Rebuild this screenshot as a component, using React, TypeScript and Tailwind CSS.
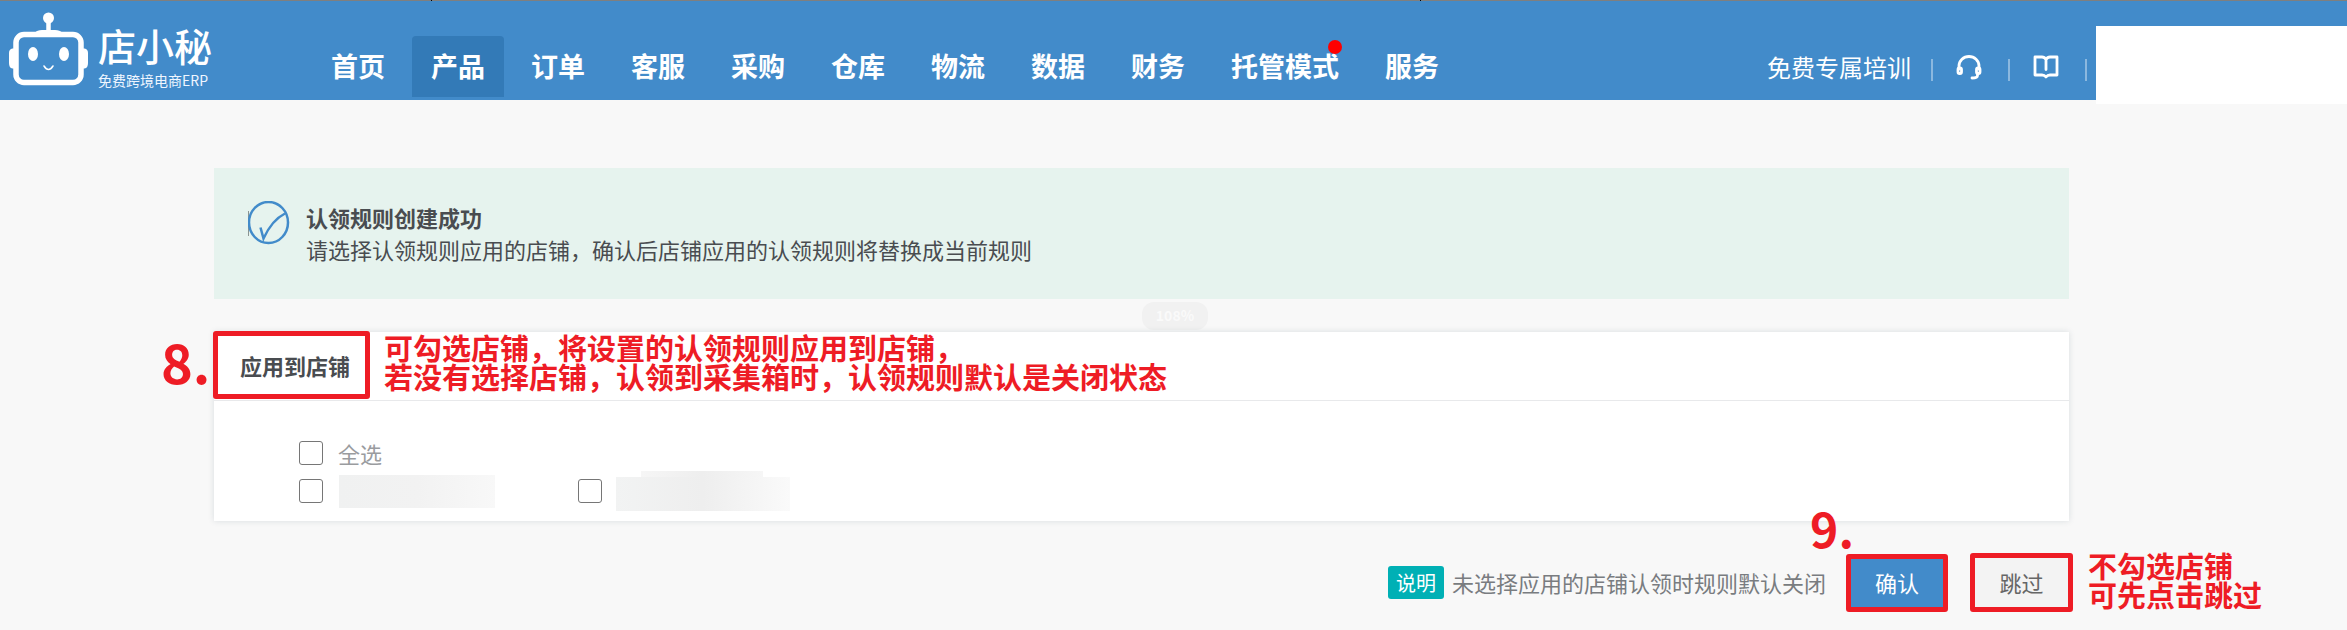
import React, { useState } from 'react';

const navItems = [
  { label: '首页' },
  { label: '产品', active: true },
  { label: '订单' },
  { label: '客服' },
  { label: '采购' },
  { label: '仓库' },
  { label: '物流' },
  { label: '数据' },
  { label: '财务' },
  { label: '托管模式', dot: true },
  { label: '服务' },
];

const Logo: React.FC = () => (
  <a href="#" className="flex items-start pl-2 pt-[11px] text-white">
    <svg width="82" height="75" viewBox="0 0 82 75" fill="none" aria-hidden="true">
      <circle cx="40.500" cy="6" r="5.500" fill="#fff" />
      <path d="M40.500 10v11" stroke="#fff" strokeWidth="4.500" />
      <path d="M27 20.500q2-2.500 7-2.500h13q5 0 7 2.500z" fill="#fff" />
      <rect x="8" y="22.500" width="65" height="48" rx="8" stroke="#fff" strokeWidth="5.500" />
      <path d="M6 36.500H4.500Q1 37 1 41v10q0 5 3.500 5.500H6zM75 36.500h1.500Q80 37 80 41v10q0 5-3.500 5.500H75z" fill="#fff" />
      <ellipse cx="25" cy="42" rx="5" ry="7" fill="#fff" />
      <ellipse cx="56" cy="42" rx="5" ry="7" fill="#fff" />
      <path d="M36 54q4.500 7 9 0" stroke="#fff" strokeWidth="1.500" strokeLinecap="round" />
    </svg>
    <span className="ml-2 mt-2 flex w-[113px] flex-col whitespace-nowrap">
      <span className="text-[38px] font-medium leading-[50px]">店小秘</span>
      <span className="text-[14px] leading-5 text-blue-50">免费跨境电商ERP</span>
    </span>
  </a>
);

const HeadsetIcon: React.FC = () => (
  <svg width="26" height="26" viewBox="0 0 26 26" fill="none" stroke="#fff" strokeWidth="2.800" strokeLinecap="round" strokeLinejoin="round" aria-hidden="true">
    <path d="M3 15v-3a10 9.500 0 0 1 20 0v3" />
    <rect x="2" y="14" width="3.500" height="5.500" rx="1.500" />
    <rect x="20.500" y="14" width="3.500" height="5.500" rx="1.500" />
    <path d="M21.500 19.500v2q0 2.500-5.500 2.500" />
  </svg>
);

const BookIcon: React.FC = () => (
  <svg width="26" height="24" viewBox="0 0 26 24" fill="none" stroke="#fff" strokeWidth="2.800" strokeLinecap="round" strokeLinejoin="round" aria-hidden="true">
    <path d="M13 4.500Q11.500 2 9 2H2v18h7q2.500 0 4 2 1.500-2 4-2h7V2h-7q-2.500 0-4 2.500zM13 5v9.500" />
  </svg>
);

const Header: React.FC = () => (
  <header className="relative flex h-[100px] items-start border-t border-[#7f7f7f] bg-[#428bca]">
    <span className="absolute -top-px left-[431px] h-px w-px bg-black" />
    <span className="absolute -top-px left-[1420px] h-px w-px bg-black" />
    <Logo />
    <nav className="ml-[101px] flex gap-2 pt-[35px]">
      {navItems.map((item) => (
        <a
          key={item.label}
          href="#"
          className={`relative flex h-[61px] items-center whitespace-nowrap rounded-t px-[19px] text-[27px] font-bold text-white ${item.active ? 'bg-[#337ab7]' : ''}`}
        >
          {item.label}
          {item.dot && <span className="absolute right-4 top-1 h-3.5 w-3.5 rounded-full bg-[#ff0000]" />}
        </a>
      ))}
    </nav>
    <div className="ml-auto mt-12 flex h-9 items-center pr-[9px] text-white">
      <a href="#" className="whitespace-nowrap text-[24px]">免费专属培训</a>
      <span className="ml-5 mr-[23px] mt-1.5 h-[22px] w-0.5 bg-[#8bb8df]" />
      <button type="button" aria-label="在线客服"><HeadsetIcon /></button>
      <span className="ml-[26px] mr-[23px] mt-1.5 h-[22px] w-0.5 bg-[#8bb8df]" />
      <button type="button" aria-label="帮助文档"><BookIcon /></button>
      <span className="ml-[26px] mt-1.5 h-[22px] w-0.5 bg-[#8bb8df]" />
    </div>
    <div className="mt-[25px] h-[78px] w-[251px] shrink-0 bg-white" />
  </header>
);

const checkboxClass =
  'h-6 w-6 shrink-0 appearance-none rounded-[3px] border border-[#767676] bg-white checked:bg-[#428bca]';

const App: React.FC = () => {
  const [shops, setShops] = useState([false, false]);

  const toggleShop = (index: number) => {
    setShops(shops.map((checked, i) => (i === index ? !checked : checked)));
  };

  return (
    <div className="min-h-screen overflow-hidden bg-[#f8f8f8] font-['Noto_Sans_CJK_SC',sans-serif] text-[22px] text-[#494c50]">
      <Header />

      <main className="ml-[214px] mr-[278px] pt-[68px]">
        <section className="flex h-[131px] items-start bg-[#e6f3ee] pl-[34px] pt-[33px]">
          <svg width="42" height="44" viewBox="0 0 42 44" fill="none" aria-hidden="true">
            <path d="M.500 10v25" stroke="#8b9492" />
            <ellipse cx="20.500" cy="21.500" rx="19.500" ry="20.500" stroke="#428bca" strokeWidth="2.500" />
            <path d="M12.500 26.500l3 11Q24 19 37 12.500" stroke="#428bca" strokeWidth="2.500" />
          </svg>
          <div className="ml-4 leading-8">
            <h1 className="font-bold">认领规则创建成功</h1>
            <p>请选择认领规则应用的店铺，确认后店铺应用的认领规则将替换成当前规则</p>
          </div>
        </section>

        <div className="flex h-[33px] justify-center pt-[3px]">
          <span className="ml-[67px] h-7 w-[66px] rounded-xl bg-[#f1f1f1] text-center text-[14px] font-bold leading-[26px] text-[#fafafa]">108%</span>
        </div>

        <section className="relative bg-white shadow-[0_0_6px_rgba(40,70,90,0.15)]">
          <div className="flex h-[69px] items-center border-b border-[#e8e9eb] pb-0.5 pl-[26px]">
            <h2 className="font-bold">应用到店铺</h2>
          </div>
          <div className="flex flex-col gap-[5px] pb-[13px] pl-[85px] pt-9">
            <label className="flex h-8 items-center gap-[15px] text-[#9a9c9f]">
              <input
                type="checkbox"
                className={checkboxClass}
                checked={shops.every(Boolean)}
                onChange={(e) => setShops(shops.map(() => e.target.checked))}
              />
              全选
            </label>
            <div className="flex h-[34px] items-center">
              <input type="checkbox" aria-label="店铺 1" className={checkboxClass} checked={shops[0]} onChange={() => toggleShop(0)} />
              <span className="ml-4 h-[33px] w-[156px] bg-linear-to-r from-[#f0f1f1] via-[#f2f2f2] to-[#f8f8f8]" />
              <input type="checkbox" aria-label="店铺 2" className={`ml-[83px] ${checkboxClass}`} checked={shops[1]} onChange={() => toggleShop(1)} />
              <span className="ml-3.5 flex flex-col">
                <span className="ml-[25px] h-1.5 w-[122px] bg-linear-to-r from-[#f6f6f6] via-[#eeeeee] to-[#f6f6f6]" />
                <span className="h-[34px] w-[174px] bg-linear-to-r from-[#f2f3f3] via-[#eeeeee] to-[#fafafa]" />
              </span>
            </div>
          </div>

          <div className="pointer-events-none absolute -left-px -top-px h-[68px] w-[157px] rounded-[3px] border-[5px] border-[#ee1c25]" />
          <span className="absolute -left-[53px] -top-0.5 text-[54px] font-bold leading-[62px] text-[#ee1c25]">8.</span>
          <p className="absolute left-[170px] top-px whitespace-nowrap text-[29px] font-bold leading-[29px] text-[#ee1c25]">
            可勾选店铺，将设置的认领规则应用到店铺，
            <br />
            若没有选择店铺，认领到采集箱时，认领规则默认是关闭状态
          </p>
        </section>

        <footer className="relative -mr-1 mt-8 flex h-[59px] items-center justify-end">
          <span className="rounded-[3px] bg-[#00b0b5] px-2 text-[20px] leading-[33px] text-white">说明</span>
          <span className="ml-2 mr-5 text-[#797c80]">未选择应用的店铺认领时规则默认关闭</span>
          <button type="button" className="h-[58px] w-[102px] rounded-[3px] border-[5px] border-[#ee1c25] bg-[#428bca] text-white">确认</button>
          <button type="button" className="ml-[22px] h-[59px] w-[103px] rounded-[3px] border-[5px] border-[#ee1c25] bg-[#f3f3f3] text-[#666]">跳过</button>
          <span className="absolute -top-[54px] right-[219px] text-[48px] font-bold leading-[56px] text-[#ee1c25]">9.</span>
          <p className="absolute -top-0.5 left-full ml-[15px] whitespace-nowrap text-[29px] font-bold leading-[29px] text-[#ee1c25]">
            不勾选店铺
            <br />
            可先点击跳过
          </p>
        </footer>
      </main>
    </div>
  );
};

export default App;
